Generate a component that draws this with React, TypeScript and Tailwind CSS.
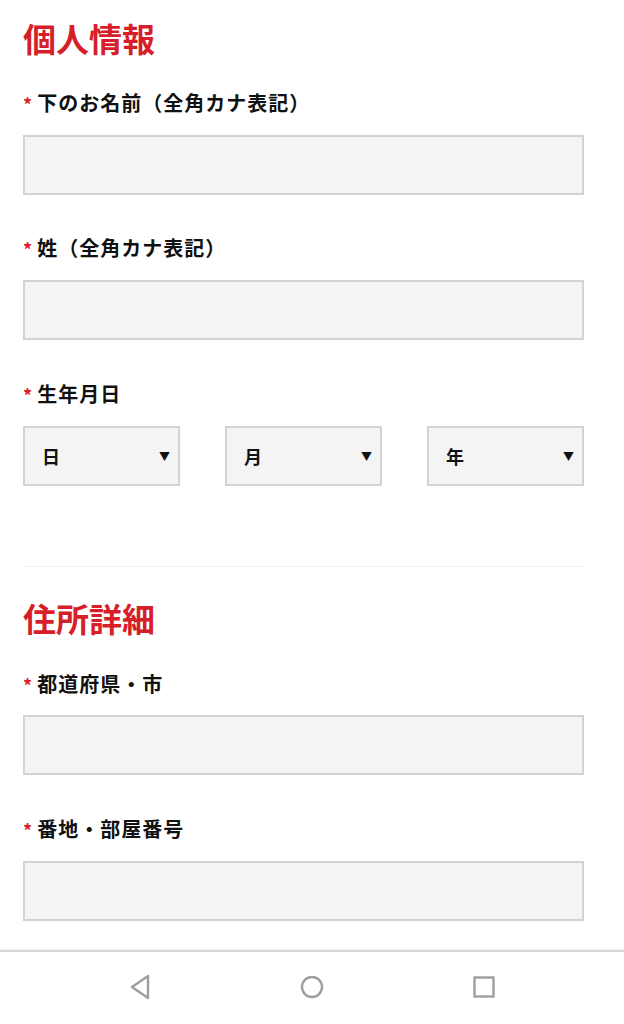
import React from 'react';

const font = { fontFamily: '"Noto Sans CJK JP", "Noto Sans", sans-serif' };

const Label: React.FC<{ text: string; className?: string }> = ({ text, className = '' }) => (
  <div className={`flex items-center h-[24px] ${className}`}>
    <span className="text-[18px] font-bold text-[#d71f2a] mr-[5px] leading-none mt-[2px]">*</span>
    <span className="text-[20px] font-bold text-[#111] leading-[24px] tracking-[1px]">{text}</span>
  </div>
);

const TextInput: React.FC<{ className?: string }> = ({ className = '' }) => (
  <div className={`h-[60px] w-full bg-[#f4f4f4] border-2 border-[#d3d3d3] ${className}`} />
);

const Select: React.FC<{ text: string }> = ({ text }) => (
  <div className="h-[60px] w-[157px] bg-[#f4f4f4] border-2 border-[#d3d3d3] flex items-center justify-between pl-[17px] pr-[8px]">
    <span className="text-[18px] font-bold text-[#111]">{text}</span>
    <span className="text-[11px] text-[#111]">▼</span>
  </div>
);

const SectionTitle: React.FC<{ text: string; className?: string }> = ({ text, className = '' }) => (
  <h2 className={`text-[33px] leading-[40px] font-bold text-[#d71f2a] ${className}`}>{text}</h2>
);

const App: React.FC = () => {
  return (
    <div className="w-[624px] h-[1024px] bg-white flex flex-col overflow-hidden" style={font}>
      <main className="flex-1 pl-[23px] pr-[40px] pt-[18px] overflow-hidden">
        <SectionTitle text="個人情報" />
        <Label text="下のお名前（全角カナ表記）" className="mt-[33px]" />
        <TextInput className="mt-[20px]" />
        <Label text="姓（全角カナ表記）" className="mt-[41px]" />
        <TextInput className="mt-[20px]" />
        <Label text="生年月日" className="mt-[42px]" />
        <div className="mt-[20px] flex justify-between">
          <Select text="日" />
          <Select text="月" />
          <Select text="年" />
        </div>
        <div className="mt-[80px] h-px bg-[#efefef]" />
        <SectionTitle text="住所詳細" className="mt-[31px]" />
        <Label text="都道府県・市" className="mt-[34px]" />
        <TextInput className="mt-[19px]" />
        <Label text="番地・部屋番号" className="mt-[42px]" />
        <TextInput className="mt-[20px]" />
      </main>
      <nav className="h-[74px] bg-white border-t-2 border-[#d8d8d8] shadow-[0_-1px_2px_rgba(0,0,0,0.08)] flex items-center justify-center">
        <div className="flex items-center -mt-[2px]">
          <div className="w-[172px] flex justify-center">
            <svg width="22" height="26" viewBox="0 0 22 26">
              <path d="M19 2 L3 13 L19 24 Z" fill="none" stroke="#9e9e9e" strokeWidth="2.4" strokeLinejoin="round" />
            </svg>
          </div>
          <div className="w-[172px] flex justify-center">
            <svg width="24" height="24" viewBox="0 0 24 24">
              <circle cx="12" cy="12" r="10" fill="none" stroke="#9e9e9e" strokeWidth="2.4" />
            </svg>
          </div>
          <div className="w-[172px] flex justify-center">
            <svg width="22" height="22" viewBox="0 0 22 22">
              <rect x="1.5" y="1.5" width="19" height="19" fill="none" stroke="#9e9e9e" strokeWidth="2.4" />
            </svg>
          </div>
        </div>
      </nav>
    </div>
  );
};

export default App;
